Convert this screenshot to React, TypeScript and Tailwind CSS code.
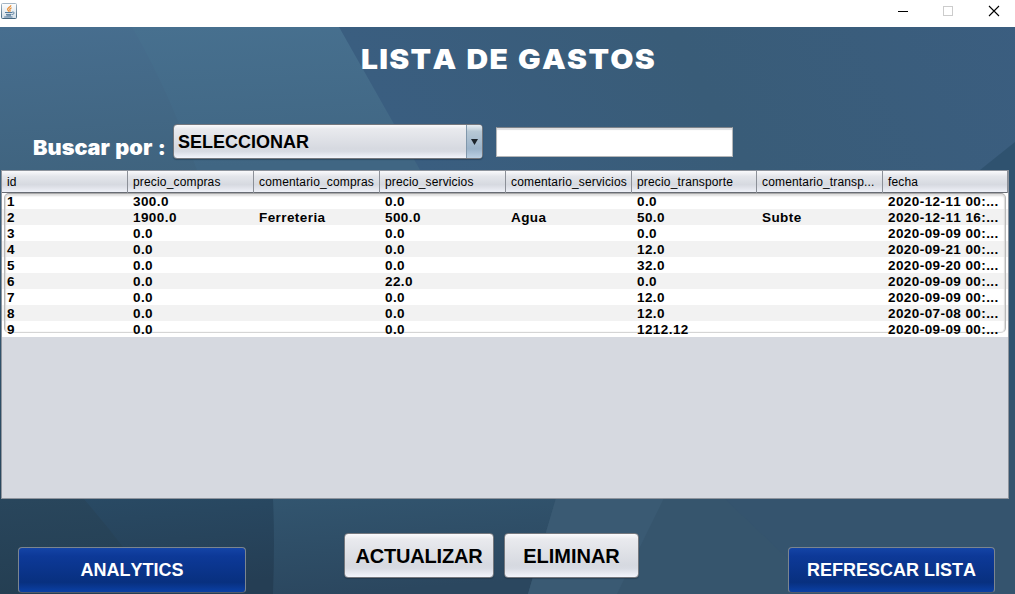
import React from "react";

const columns = [
  "id",
  "precio_compras",
  "comentario_compras",
  "precio_servicios",
  "comentario_servicios",
  "precio_transporte",
  "comentario_transp...",
  "fecha",
];

const rows = [
  ["1", "300.0", "", "0.0", "", "0.0", "", "2020-12-11 00:..."],
  ["2", "1900.0", "Ferreteria", "500.0", "Agua", "50.0", "Subte", "2020-12-11 16:..."],
  ["3", "0.0", "", "0.0", "", "0.0", "", "2020-09-09 00:..."],
  ["4", "0.0", "", "0.0", "", "12.0", "", "2020-09-21 00:..."],
  ["5", "0.0", "", "0.0", "", "32.0", "", "2020-09-20 00:..."],
  ["6", "0.0", "", "22.0", "", "0.0", "", "2020-09-09 00:..."],
  ["7", "0.0", "", "0.0", "", "12.0", "", "2020-09-09 00:..."],
  ["8", "0.0", "", "0.0", "", "12.0", "", "2020-07-08 00:..."],
  ["9", "0.0", "", "0.0", "", "1212.12", "", "2020-09-09 00:..."],
];

const gridCols = "grid grid-cols-[126px_126px_126px_126px_126px_125px_126px_125px]";
const silver =
  "border border-[#75787e] rounded-[4px] bg-[linear-gradient(#fafafc_0%,#e9eaee_12%,#d6d9e0_72%,#d8dbe3_80%,#f3f5fc_100%)] shadow-[0_1px_1px_rgba(20,35,50,0.4)]";
const royal =
  "rounded-[4px] border border-[#7b858f] border-b-[#505c6c] bg-[linear-gradient(#1444a6_0%,#0d3998_18%,#08307f_78%,#0b40a5_100%)] text-white text-[18px] font-bold flex items-center justify-center";

function Backdrop() {
  return (
    <svg className="absolute inset-0 -z-10" width="1015" height="567" viewBox="0 27 1015 567" preserveAspectRatio="none">
      <defs>
        <linearGradient id="steel" x1="0" y1="0" x2="0.12" y2="1">
          <stop offset="0" stopColor="#476e8f" />
          <stop offset="0.28" stopColor="#3f637e" />
          <stop offset="0.6" stopColor="#2f5069" />
          <stop offset="1" stopColor="#243e52" />
        </linearGradient>
        <linearGradient id="beam" x1="0" y1="0" x2="0.1" y2="1">
          <stop offset="0" stopColor="#47708f" />
          <stop offset="1" stopColor="#406683" />
        </linearGradient>
        <linearGradient id="mid" x1="0" y1="0" x2="1" y2="-0.3">
          <stop offset="0" stopColor="#3a5e80" />
          <stop offset="0.45" stopColor="#395c78" />
          <stop offset="1" stopColor="#3b5e81" />
        </linearGradient>
        <linearGradient id="lowleft" x1="0" y1="0" x2="0.2" y2="1">
          <stop offset="0" stopColor="#294a64" />
          <stop offset="1" stopColor="#253e54" />
        </linearGradient>
        <linearGradient id="lowmid" x1="0" y1="0" x2="0.25" y2="1">
          <stop offset="0" stopColor="#32556f" />
          <stop offset="1" stopColor="#2b475f" />
        </linearGradient>
      </defs>
      <rect y="27" width="1015" height="567" fill="url(#steel)" />
      <path d="M132 27H345L424 170H197C177 115 158 72 132 27Z" fill="url(#beam)" />
      <path d="M339 27H1015V400H550L420 170Z" fill="url(#mid)" />
      <path d="M980 170L1015 142V400H980Z" fill="#2f526f" />
      <path d="M1000 400H1015V594H1000Z" fill="#35546e" />
      <path d="M83 498H275V594H158Q118 538 83 498Z" fill="url(#lowleft)" />
      <path d="M273 498H560L530 594H273Q275 540 273 498Z" fill="url(#lowmid)" />
      <path d="M556 498H1015V594H528Z" fill="#36556d" />
      <path d="M556 498H664L617 594H528Z" fill="#3a5a73" />
      <path d="M724 498H1015V594H825Z" fill="#35546e" />
    </svg>
  );
}

function JavaIcon() {
  return (
    <svg width="16" height="16" viewBox="0 0 16 16" fill="none">
      <defs>
        <linearGradient id="tile" x1="0" y1="0" x2="0" y2="1">
          <stop stopColor="#fdfefe" />
          <stop offset="1" stopColor="#d5dfe8" />
        </linearGradient>
        <linearGradient id="edge" x1="0" y1="0" x2="0" y2="1">
          <stop stopColor="#a4b6c5" />
          <stop offset="1" stopColor="#456780" />
        </linearGradient>
      </defs>
      <rect x=".5" y=".5" width="15" height="15" rx="1" fill="url(#tile)" stroke="url(#edge)" />
      <path d="M9.9 2.2C10 4 6.2 4.8 6.6 6.5C6.8 7.3 7.6 7.7 7.8 8.7M10.6 4.8C8.8 5.5 8.4 6.3 9 7.1C9.3 7.7 9 8.2 8.7 8.6" stroke="#e98b2f" strokeWidth="1.2" />
      <path d="M4 9.5H11M5 11.4H10.5M5.4 12.8H10M3.2 14H11.5M11 9.2C13.8 8.4 13.8 11 11.2 11.5" stroke="#52799a" strokeWidth="1" />
    </svg>
  );
}

export default function App() {
  return (
    <div className="h-[594px] w-[1015px] overflow-hidden bg-white font-['Liberation_Sans',Arial,sans-serif] [font-kerning:none] text-black">
      <header className="flex h-[27px] items-start justify-between">
        <div className="pl-px pt-[3px]">
          <JavaIcon />
        </div>
        <div className="flex gap-[34px] pr-[15px] pt-[5px]">
          <svg width="12" height="12" viewBox="0 0 12 12" shapeRendering="crispEdges"><path d="M1 6.5H11" stroke="#000" /></svg>
          <svg width="11" height="12" viewBox="0 0 11 12" shapeRendering="crispEdges"><rect x=".5" y="1.5" width="9" height="9" fill="none" stroke="#ccc" /></svg>
          <svg width="12" height="12" viewBox="0 0 12 12"><path d="M1 1L11 11M11 1L1 11" stroke="#000" strokeWidth="1.1" /></svg>
        </div>
      </header>

      <main className="relative isolate flex h-[567px] flex-col">
        <Backdrop />
        <h1 className="ml-[361px] h-[97px] w-[280px] origin-left scale-x-[1.09] whitespace-nowrap pt-[12px] font-['Inter',sans-serif] text-[27.5px] font-black leading-[40px] tracking-[1.2px] [word-spacing:1.5px] text-white">
          LISTA DE GASTOS
        </h1>

        <div className="flex h-[46px] items-start pl-[33px]">
          <label className="w-[140px] origin-left scale-x-[1.06] whitespace-nowrap pt-[9px] font-['Inter',sans-serif] text-[20.5px] font-black leading-[30px] [word-spacing:1px] text-white">
            Buscar por :
          </label>
          <div className={`${silver} flex h-[35px] w-[310px] overflow-hidden`}>
            <span className="flex-1 pl-[4px] text-[18px] font-bold leading-[34px]">SELECCIONAR</span>
            <span className="flex w-[16px] items-center justify-center border-l border-[#8097ab] bg-[linear-gradient(#e6edf2_0%,#b7c8d5_20%,#9bb3c9_72%,#bcd0e3_100%)]">
              <svg width="7" height="6" viewBox="0 0 7 6"><path d="M0 0H7L3.5 6Z" fill="#1d242b" /></svg>
            </span>
          </div>
          <div className="ml-[13px] mt-[3px] h-[30px] w-[237px] border border-[#b4b6b8] border-t-[#7d838a] bg-white shadow-[inset_0_2px_1px_#dedfe1]" />
        </div>

        <section className="ml-px flex h-[329px] w-[1008px] flex-col border border-[#8e949d] bg-[#d6d9e0]">
          <div className={`${gridCols} h-[22px] border-b border-[#686c74] bg-[linear-gradient(#fafafc_0%,#e4e6eb_25%,#d6d9e0_65%,#eff1f8_100%)]`}>
            {columns.map((name) => (
              <div key={name} className="whitespace-nowrap border-r border-[#8c9098] pl-[5px] text-[12px] leading-[22px] tracking-[0.16px]">
                {name}
              </div>
            ))}
          </div>
          <div className="relative">
            {rows.map((row) => (
              <div key={row[0]} className={`${gridCols} h-[16px] odd:bg-white even:bg-[#f2f2f2]`}>
                {row.map((cell, i) => (
                  <div key={i} className="relative z-10 whitespace-nowrap pl-[5px] text-[13.5px] font-bold leading-[17px] tracking-[0.42px]">
                    {cell}
                  </div>
                ))}
              </div>
            ))}
            <div className="pointer-events-none absolute bottom-[4px] left-[2px] right-[2px] top-0 rounded-[5px] border border-t-[#a9a9a9] border-x-[#b9b9b9] border-b-[#d5d5d5] shadow-[inset_0_2px_2px_#dddddd,inset_1px_0_1px_#dddddd,inset_-1px_0_1px_#dddddd]" />
          </div>
        </section>

        <footer className="flex h-[95px] items-start pl-[18px]">
          <button className={`${royal} mt-[48px] h-[46px] w-[228px]`}>ANALYTICS</button>
          <button className={`${silver} ml-[98px] mt-[34px] h-[45px] w-[150px] whitespace-nowrap text-[20px] font-bold tracking-[-0.2px]`}>ACTUALIZAR</button>
          <button className={`${silver} ml-[10px] mt-[34px] h-[45px] w-[135px] text-[20px] font-bold`}>ELIMINAR</button>
          <button className={`${royal} ml-[149px] mt-[48px] h-[46px] w-[207px]`}>REFRESCAR LISTA</button>
        </footer>
      </main>
    </div>
  );
}
